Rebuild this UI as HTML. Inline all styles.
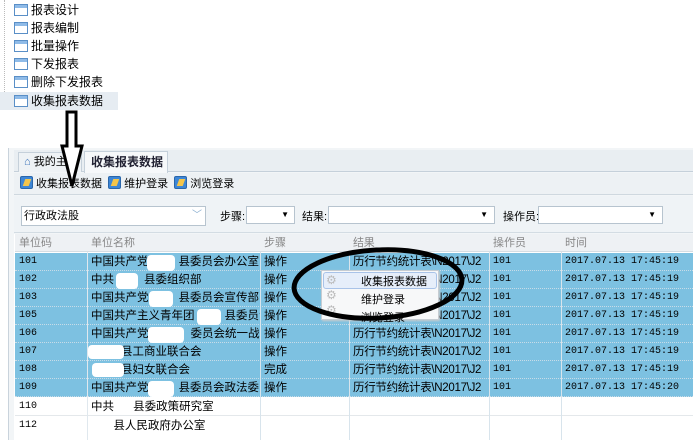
<!DOCTYPE html>
<html><head><meta charset="utf-8"><style>
*{margin:0;padding:0;box-sizing:border-box}
body{width:693px;height:440px;background:#fff;position:relative;overflow:hidden;font-family:"Liberation Sans","Noto Sans CJK SC",sans-serif;font-size:12px;color:#000}
.a{position:absolute}
.ti{position:absolute;left:14px;height:18px;line-height:18px;font-size:12px}
.ti i{position:absolute;left:0;top:3px;width:14px;height:12px;border:1px solid #5a8fc7;background:linear-gradient(#8fbbe8 0 3px,#fff 3px)}
.ti span{position:absolute;left:17px;white-space:nowrap}
.ico{display:inline-block;width:13px;height:13px;background:#3d86d6;border:1px solid #2a66aa;border-radius:2px;vertical-align:-2px;margin-right:3px;position:relative}
.ico:after{content:"";position:absolute;left:3px;top:2px;width:6px;height:7px;background:#f4c54a;transform:skewX(-20deg)}
.row{position:absolute;left:15px;width:678px;height:18px;line-height:18px;border-bottom:1px dotted #c8dce8;font-size:11.5px}
.row div{position:absolute;top:0;height:18px;white-space:nowrap;overflow:hidden;padding-left:4px}
.sel{background:#7dc1e1}
.c1{left:0;width:72px}.c2{left:72px;width:173px}.c3{left:245px;width:89px}.c4{left:334px;width:140px;letter-spacing:-0.3px}.c5{left:474px;width:72px}.c6{left:546px;width:132px}
.mono{font-family:"Liberation Mono","DejaVu Sans Mono",monospace;font-size:10px}
.vl{position:absolute;top:252px;height:188px;width:1px;background:#d8e4ec}
.wb{position:absolute;background:#fff;border-radius:4px}
</style></head><body>
<div class="a" style="left:4px;top:0;height:110px;border-left:1px dotted #bbb"></div>
<div class="a" style="left:0;top:92px;width:118px;height:18px;background:#e6ecf2"></div>
<div class="ti" style="top:1px"><i></i><span>报表设计</span></div>
<div class="ti" style="top:19px"><i></i><span>报表编制</span></div>
<div class="ti" style="top:37px"><i></i><span>批量操作</span></div>
<div class="ti" style="top:55px"><i></i><span>下发报表</span></div>
<div class="ti" style="top:73px"><i></i><span>删除下发报表</span></div>
<div class="ti" style="top:92px"><i></i><span>收集报表数据</span></div>
<div class="a" style="left:8px;top:148px;width:685px;height:292px;border-left:1px solid #c9d3dc;background:#f2f5f7"></div>
<div class="a" style="left:14px;top:150px;width:679px;height:22px;background:#e9eef2;border-bottom:1px solid #c5d0da"></div>
<div class="a" style="left:18px;top:152px;width:64px;height:20px;border:1px solid #c5d0da;border-bottom:none;background:#eef2f5;line-height:19px;padding-left:5px;font-size:11px"><span style="color:#3a72b8">⌂</span> 我的主页</div>
<div class="a" style="left:84px;top:151px;width:84px;height:22px;border:1px solid #c5d0da;border-bottom:none;background:#f6f8fa;line-height:20px;padding-left:6px;font-weight:bold;color:#223">收集报表数据 <span style="font-weight:normal;color:#aaa;font-size:10px;vertical-align:3px">✕</span></div>
<div class="a" style="left:14px;top:173px;width:679px;height:22px;background:#edf1f4;border-bottom:1px solid #cfd8df;line-height:22px;padding-left:6px;font-size:11px">
<span class="ico"></span>收集报表数据&nbsp; <span class="ico"></span>维护登录&nbsp; <span class="ico"></span>浏览登录</div>
<div class="a" style="left:14px;top:196px;width:679px;height:37px;background:#eff3f6;border-bottom:1px solid #d3dce3"></div>
<div class="a" style="left:21px;top:206px;width:185px;height:20px;background:#fff;border:1px solid #b7c4cf;line-height:18px;padding-left:2px;font-size:11px">行政政法股<span style="position:absolute;right:0;top:0;width:16px;height:18px;color:#8aafd0;font-size:10px;text-align:center">﹀</span></div>
<div class="a" style="left:220px;top:208px;font-size:11px">步骤:</div>
<div class="a" style="left:246px;top:206px;width:49px;height:18px;background:#fff;border:1px solid #b7c4cf;font-size:8px;text-align:right;padding-right:5px;line-height:16px">▼</div>
<div class="a" style="left:302px;top:208px;font-size:11px">结果:</div>
<div class="a" style="left:328px;top:206px;width:167px;height:18px;background:#fff;border:1px solid #b7c4cf;font-size:8px;text-align:right;padding-right:6px;line-height:16px">▼</div>
<div class="a" style="left:503px;top:208px;font-size:11px">操作员:</div>
<div class="a" style="left:538px;top:206px;width:125px;height:18px;background:#fff;border:1px solid #b7c4cf;font-size:8px;text-align:right;padding-right:6px;line-height:16px">▼</div>
<div class="a" style="left:14px;top:234px;width:679px;height:206px;background:#fff"></div>
<div class="row" style="top:234px;background:#eef1f4;color:#888;font-size:11px;border-bottom:1px solid #d5dde3"><div class="c1">单位码</div><div class="c2">单位名称</div><div class="c3">步骤</div><div class="c4">结果</div><div class="c5">操作员</div><div class="c6">时间</div></div>
<div class="row sel" style="top:253px"><div class="c1 mono">101</div><div class="c2">中国共产党<b style="display:inline-block;width:30px"></b>县委员会办公室</div><div class="c3">操作</div><div class="c4">历行节约统计表\N2017\J2</div><div class="c5 mono">101</div><div class="c6 mono">2017.07.13 17:45:19</div></div>
<div class="row sel" style="top:271px"><div class="c1 mono">102</div><div class="c2">中共<b style="display:inline-block;width:30px"></b>县委组织部</div><div class="c3">操作</div><div class="c4">历行节约统计表\N2017\J2</div><div class="c5 mono">101</div><div class="c6 mono">2017.07.13 17:45:19</div></div>
<div class="row sel" style="top:289px"><div class="c1 mono">103</div><div class="c2">中国共产党<b style="display:inline-block;width:30px"></b>县委员会宣传部</div><div class="c3">操作</div><div class="c4">历行节约统计表\N2017\J2</div><div class="c5 mono">101</div><div class="c6 mono">2017.07.13 17:45:19</div></div>
<div class="row sel" style="top:307px"><div class="c1 mono">105</div><div class="c2">中国共产主义青年团<b style="display:inline-block;width:30px"></b>县委员会</div><div class="c3">操作</div><div class="c4">历行节约统计表\N2017\J2</div><div class="c5 mono">101</div><div class="c6 mono">2017.07.13 17:45:19</div></div>
<div class="row sel" style="top:325px"><div class="c1 mono">106</div><div class="c2">中国共产党<b style="display:inline-block;width:42px"></b>委员会统一战线</div><div class="c3">操作</div><div class="c4">历行节约统计表\N2017\J2</div><div class="c5 mono">101</div><div class="c6 mono">2017.07.13 17:45:19</div></div>
<div class="row sel" style="top:343px"><div class="c1 mono">107</div><div class="c2"><b style="display:inline-block;width:30px"></b>县工商业联合会</div><div class="c3">操作</div><div class="c4">历行节约统计表\N2017\J2</div><div class="c5 mono">101</div><div class="c6 mono">2017.07.13 17:45:19</div></div>
<div class="row sel" style="top:361px"><div class="c1 mono">108</div><div class="c2"><b style="display:inline-block;width:30px"></b>县妇女联合会</div><div class="c3">完成</div><div class="c4">历行节约统计表\N2017\J2</div><div class="c5 mono">101</div><div class="c6 mono">2017.07.13 17:45:19</div></div>
<div class="row sel" style="top:379px"><div class="c1 mono">109</div><div class="c2">中国共产党<b style="display:inline-block;width:30px"></b>县委员会政法委员</div><div class="c3">操作</div><div class="c4">历行节约统计表\N2017\J2</div><div class="c5 mono">101</div><div class="c6 mono">2017.07.13 17:45:20</div></div>
<div class="row" style="top:398px;border-bottom:1px solid #e4e8eb"><div class="c1 mono">110</div><div class="c2">中共&nbsp;&nbsp;&nbsp;&nbsp;&nbsp;&nbsp;县委政策研究室</div></div>
<div class="row" style="top:417px;border-bottom:none"><div class="c1 mono">112</div><div class="c2">&nbsp;&nbsp;&nbsp;&nbsp;&nbsp;&nbsp;&nbsp;县人民政府办公室</div></div>
<div class="vl" style="left:87px;background:#e0e8ee"></div><div class="vl" style="left:260px"></div><div class="vl" style="left:349px"></div><div class="vl" style="left:489px"></div><div class="vl" style="left:561px"></div>
<div class="wb" style="left:147px;top:255px;width:28px;height:16px"></div>
<div class="wb" style="left:116px;top:273px;width:22px;height:16px"></div>
<div class="wb" style="left:149px;top:291px;width:24px;height:16px"></div>
<div class="wb" style="left:197px;top:309px;width:24px;height:16px"></div>
<div class="wb" style="left:148px;top:327px;width:36px;height:16px"></div>
<div class="wb" style="left:88px;top:345px;width:36px;height:14px"></div>
<div class="wb" style="left:92px;top:363px;width:32px;height:14px"></div>
<div class="wb" style="left:148px;top:381px;width:26px;height:16px"></div>
<div class="a" style="left:321px;top:270px;width:118px;height:50px;background:#f7f8f9;border:1px solid #c6ccd2;box-shadow:1px 1px 2px #ccc"></div>
<div class="a" style="left:323px;top:272px;width:114px;height:17px;background:#e6eefa;border:1px solid #a9c3e8;border-radius:3px"></div>
<div class="a" style="left:326px;top:273px;color:#bbb;font-size:12px;line-height:15px">⚙<br>⚙<br>⚙</div>
<div class="a" style="left:361px;top:273px;font-size:11px;line-height:18px">收集报表数据<br>维护登录<br>浏览登录</div>
<svg class="a" style="left:0;top:0" width="693" height="440">
<ellipse cx="378" cy="284" rx="84" ry="34" fill="none" stroke="#000" stroke-width="5" transform="rotate(-3 378 284)"/>
<path d="M67 112 H76 V146 H82 L72 186 L62 146 H67 Z" fill="#fff" stroke="#000" stroke-width="3"/>
</svg>
</body></html>
